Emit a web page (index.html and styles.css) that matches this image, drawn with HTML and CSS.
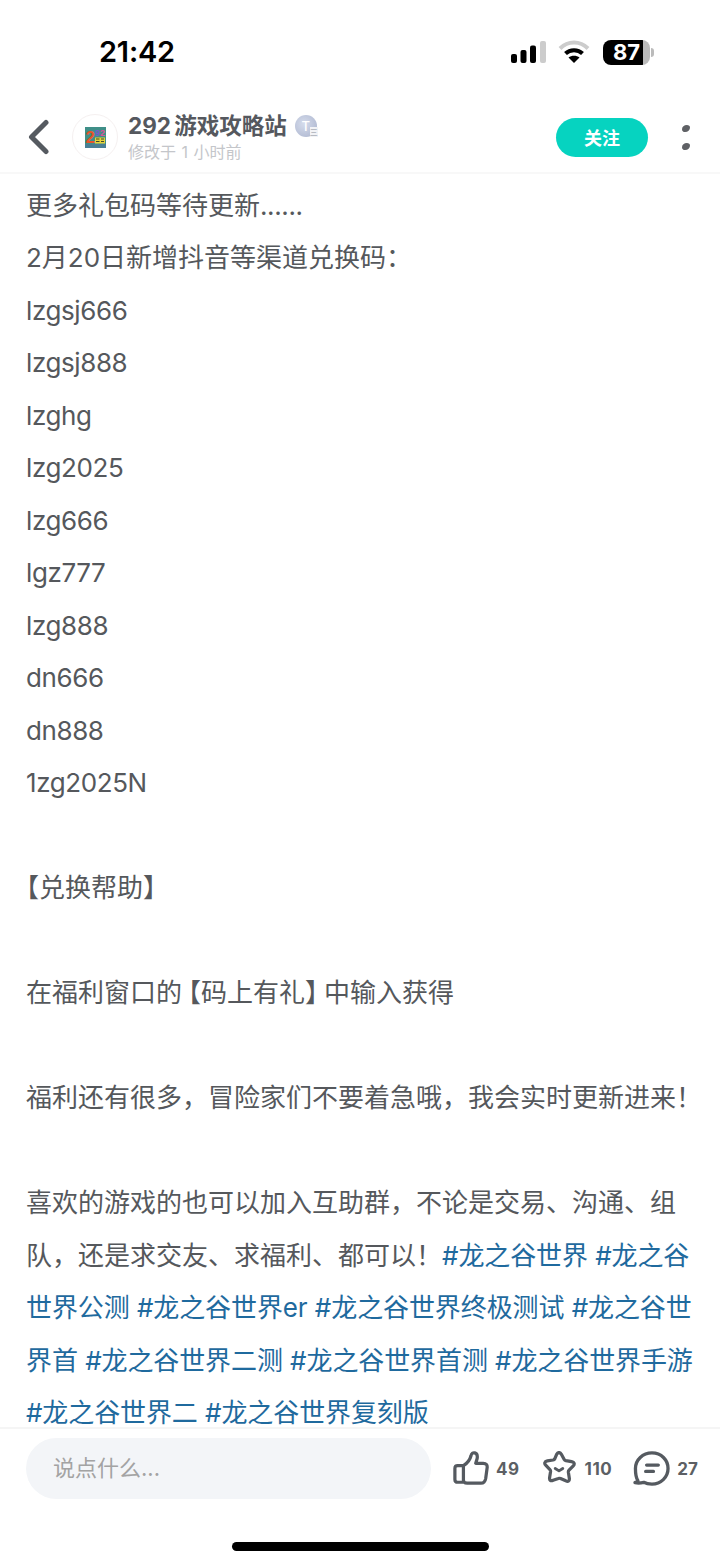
FILE: index.html
```html
<!DOCTYPE html>
<html lang="zh-CN">
<head>
    <meta charset="UTF-8">
    <meta name="viewport" content="width=device-width, initial-scale=1.0">
    <title>292游戏攻略站</title>
    <link rel="stylesheet" href="styles.css">
</head>
<body>
    <div class="page">
        <div class="status-bar">
            <span class="time">21:42</span>
            <div class="status-icons">
                <svg class="signal" width="38" height="24" viewBox="0 0 38 24">
                    <rect x="1" y="14" width="6" height="9" rx="2" fill="#000"/>
                    <rect x="10.500" y="10" width="6" height="13" rx="2" fill="#000"/>
                    <rect x="20" y="5.500" width="6" height="17.500" rx="2" fill="#000"/>
                    <rect x="30" y="1" width="6" height="22" rx="2" fill="#ccc"/>
                </svg>
                <svg class="wifi" width="32" height="24" viewBox="0 0 32 24">
                    <path d="M2 8.500C10 .5 22 .5 30 8.500" fill="none" stroke="#ccc" stroke-width="4"/>
                    <path d="M7.500 13.500C12 9 20 9 24.500 13.500" fill="none" stroke="#000" stroke-width="4"/>
                    <path d="M16 23l-5.500-5.500C13.500 15 18.500 15 21.500 17.500z" fill="#000"/>
                </svg>
                <div class="battery">
                    <div class="battery-body"><span>87</span></div>
                    <div class="battery-cap"></div>
                </div>
            </div>
        </div>

        <div class="topbar">
            <svg class="back" width="24" height="36" viewBox="0 0 24 36">
                <path d="M20 3.500L5.500 18 20 32.500" fill="none" stroke="#555a60" stroke-width="5" stroke-linecap="round" stroke-linejoin="round"/>
            </svg>
            <div class="avatar">
                <svg width="21" height="21" viewBox="0 0 21 21">
                    <rect width="21" height="21" fill="#3f8f88"/>
                    <rect y="17" width="21" height="4" fill="#4a7f95"/>
                    <text class="logo-two" x="0.500" y="16">2</text>
                    <text class="logo-nine" x="10" y="8.500">9</text>
                    <text class="logo-end" x="15" y="8.500">2</text>
                    <rect x="10" y="10.500" width="10" height="6" fill="#e8d23a"/>
                    <path d="M11 12h3.500M11 14.500h3.500M16 12h3M16 14.500h3" stroke="#3a4a30" stroke-width="1"/>
                </svg>
            </div>
            <div class="author">
                <div class="author-name">
                    <span>292 游戏攻略站</span>
                    <div class="badge">
                        <span class="badge-t">T</span>
                        <span class="badge-lv">三</span>
                    </div>
                </div>
                <div class="author-time">修改于 1 小时前</div>
            </div>
            <button class="follow">关注</button>
            <div class="more">
                <i></i>
                <i></i>
            </div>
        </div>

        <div class="content">
            <p>更多礼包码等待更新<span class="code">......</span></p>
            <p>2月20日新增抖音等渠道兑换码：</p>
            <p class="code">lzgsj666</p>
            <p class="code">lzgsj888</p>
            <p class="code">lzghg</p>
            <p class="code">lzg2025</p>
            <p class="code">lzg666</p>
            <p class="code">lgz777</p>
            <p class="code">lzg888</p>
            <p class="code">dn666</p>
            <p class="code">dn888</p>
            <p class="code">1zg2025N</p>
            <p>&nbsp;</p>
            <p><span class="bk">【</span>兑换帮助<span class="bk">】</span></p>
            <p>&nbsp;</p>
            <p>在福利窗口的<span class="bk bk-open">【</span>码上有礼<span class="bk bk-close">】</span>中输入获得</p>
            <p>&nbsp;</p>
            <p class="one-line">福利还有很多，冒险家们不要着急哦，我会实时更新进来！</p>
            <p>&nbsp;</p>
            <p>喜欢的游戏的也可以加入互助群，不论是交易、沟通、组队，还是求交友、求福利、都可以！<a>#龙之谷世界</a> <a>#龙之谷世界公测</a> <a>#龙之谷世界er</a> <a>#龙之谷世界终极测试</a> <a>#龙之谷世界首</a> <a>#龙之谷世界二测</a> <a>#龙之谷世界首测</a> <a>#龙之谷世界手游</a> <a>#龙之谷世界二</a> <a>#龙之谷世界复刻版</a></p>
        </div>

        <div class="bottombar">
            <div class="input">说点什么...</div>
            <div class="action action-like">
                <svg width="36" height="36" viewBox="0 0 38 38">
                    <path d="M11 15.500C15 13 18 9 19 5c.5-2.500 2-3.500 4-3 2.500.7 3 3 2.500 6l-1.500 5h8c3 0 4.500 2 4 5l-1.500 11c-.5 3-2 5-5 5H15c-2 0-4-1-4-3zM11 15.500H5c-2 0-3 1-3 3V30c0 2 1 3 3 3h6" fill="none" stroke="#555a60" stroke-width="3.400" stroke-linejoin="round"/>
                </svg>
                <span>49</span>
            </div>
            <div class="action action-star">
                <svg width="36" height="36" viewBox="0 0 38 38">
                    <path d="M16.500 3.500c1.500-2.500 3.500-2.500 5 0l3 5.500c.4.7 1 1 1.800 1.200l6 1c3 .6 3.600 2.600 1.500 4.800l-4.200 4.300c-.6.600-.8 1.300-.7 2.100l1 6.300c.4 3-1.200 4-3.700 2.800l-5.600-2.500c-.7-.3-1.500-.3-2.200 0L12.800 30.800c-2.500 1.200-4.100.2-3.700-2.800l1-6.300c.1-.8-.1-1.500-.7-2.100L5.200 15.300c-2.100-2.200-1.500-4.200 1.500-4.800l6-1c.8-.2 1.400-.5 1.800-1.200z" fill="none" stroke="#555a60" stroke-width="3.400" stroke-linejoin="round"/>
                    <path d="M15 18.500l4 2.500 4-2.500" fill="none" stroke="#555a60" stroke-width="3" stroke-linecap="round" stroke-linejoin="round"/>
                </svg>
                <span>110</span>
            </div>
            <div class="action action-comment">
                <svg width="37" height="36" viewBox="0 0 38 37">
                    <path d="M5 30.500C3.200 27.800 2.500 24 2.500 18 2.500 9 10 2 19.500 2S36 9 36 18s-7.500 16-16.500 16c-3 0-6-.5-8.500-1.800-2.500.6-6.500.8-9 .3 1.500-.6 2.500-1 3-2z" fill="none" stroke="#555a60" stroke-width="3.400" stroke-linejoin="round"/>
                    <path d="M14 14.500h12M13 21h8" fill="none" stroke="#555a60" stroke-width="3.400" stroke-linecap="round"/>
                </svg>
                <span>27</span>
            </div>
        </div>
        <div class="home-area">
            <div class="home-bar"></div>
        </div>
    </div>
</body>
</html>
```

FILE: styles.css
```css
*{
    padding: 0;
    margin: 0;
    box-sizing: border-box;
}
body{
    background-color: #fff;
    font-family: Inter, "Noto Sans CJK SC", sans-serif;
}
.page{
    width: 720px;
    height: 1564px;
    display: flex;
    flex-direction: column;
    overflow: hidden;
}

/* status bar */
.status-bar{
    height: 102px;
    flex: none;
    display: flex;
    justify-content: space-between;
    align-items: flex-start;
    padding: 33px 66px 0 99px;
}
.time{
    font-size: 29px;
    line-height: 38px;
    font-weight: 600;
    letter-spacing: -0.200px;
    color: #000;
}
.status-icons{
    display: flex;
    align-items: center;
    height: 38px;
}
.wifi{
    margin: 0 13px 0 10px;
}
.battery{
    display: flex;
    align-items: center;
    gap: 1px;
}
.battery-body{
    width: 47px;
    height: 25px;
    border-radius: 8px;
    background: linear-gradient(90deg, #000 85%, #bbb 85%);
    color: #fff;
    font-size: 22px;
    line-height: 25px;
    font-weight: 700;
    text-align: center;
}
.battery-cap{
    width: 3px;
    height: 9px;
    border-radius: 0 3px 3px 0;
    background-color: #bbb;
}

/* top bar */
.topbar{
    height: 72px;
    flex: none;
    display: flex;
    align-items: center;
    padding: 0 30px 0 26px;
    border-bottom: 2px solid #f8f8f8;
}
.back{
    flex: none;
    margin-right: 22px;
}
.avatar{
    width: 46px;
    height: 46px;
    flex: none;
    border: 1px solid #f5f0f0;
    border-radius: 50%;
    display: flex;
    align-items: center;
    justify-content: center;
    margin-right: 10px;
}
.logo-two{
    font-family: "Liberation Sans", sans-serif;
    font-size: 17px;
    font-weight: 700;
    fill: #e8542a;
}
.logo-nine,.logo-end{
    font-family: "Liberation Sans", sans-serif;
    font-size: 9px;
    font-weight: 700;
    fill: #7a5ad0;
}
.logo-end{
    fill: #e0509a;
}
.author{
    flex: 1;
    margin-top: -2px;
}
.author-name{
    display: flex;
    align-items: center;
    gap: 8px;
    font-size: 22.500px;
    line-height: 30px;
    font-weight: 700;
    word-spacing: -2px;
    color: #55585e;
}
.badge{
    position: relative;
    width: 22px;
    height: 22px;
    border-radius: 50%;
    background: radial-gradient(circle at 40% 40%, #d5dcec, #a9b2cc);
}
.badge-t{
    display: block;
    font-size: 13px;
    line-height: 22px;
    font-weight: 500;
    color: #fff;
    text-align: center;
}
.badge-lv{
    position: absolute;
    right: -1px;
    bottom: 0;
    width: 8px;
    height: 10px;
    background-color: #f2f3f6;
    font-size: 8px;
    line-height: 10px;
    font-weight: 400;
    color: #8a90a0;
    text-align: center;
}
.author-time{
    font-size: 16px;
    line-height: 20px;
    word-spacing: 1px;
    color: #c4c6ca;
    margin-top: 1px;
}
.follow{
    width: 92px;
    height: 39px;
    flex: none;
    border: none;
    border-radius: 20px;
    background-color: #06d3c0;
    color: #fff;
    font-family: inherit;
    font-size: 18px;
    font-weight: 700;
    margin-right: 34px;
}
.more{
    width: 8px;
    flex: none;
    display: flex;
    flex-direction: column;
    gap: 11px;
}
.more i{
    display: block;
    width: 8px;
    height: 7px;
    border-radius: 60% 40% 60% 40%;
    background-color: #5f6165;
}

/* content */
.content{
    flex: 1;
    min-height: 0;
    overflow: hidden;
    padding: 5.500px 24px 0 26px;
    font-size: 26px;
    line-height: 52.500px;
    color: #55585c;
}
.content a{
    color: #1f6a9e;
    letter-spacing: -0.100px;
    word-spacing: -1.500px;
}
.code{
    letter-spacing: -0.400px;
}
.one-line{
    white-space: nowrap;
}
.bk{
    font-feature-settings: "halt";
}
.bk-open{
    margin-left: 6px;
}
.bk-close{
    margin-right: 6px;
}

/* bottom bar */
.bottombar{
    height: 81px;
    flex: none;
    display: flex;
    align-items: center;
    padding: 0 20px 0 26px;
    border-top: 2px solid #f5f5f5;
}
.input{
    width: 405px;
    height: 61px;
    flex: none;
    border-radius: 31px;
    background-color: #f3f5f8;
    padding-left: 27px;
    font-size: 22px;
    line-height: 61px;
    color: #a3a3a3;
    margin-right: 22px;
}
.action{
    display: flex;
    align-items: center;
    gap: 7px;
    font-size: 17px;
    font-weight: 700;
    letter-spacing: 0.500px;
    color: #5c5f64;
}
.action-star{
    margin-left: 21px;
}
.action-star svg{
    margin-right: 1px;
}
.action-comment{
    margin-left: 21px;
}
.action-comment span{
    letter-spacing: 0;
}
.home-area{
    height: 56px;
    flex: none;
    display: flex;
    justify-content: center;
    padding-top: 34px;
}
.home-bar{
    width: 257px;
    height: 9px;
    border-radius: 5px;
    background-color: #000;
}
```
